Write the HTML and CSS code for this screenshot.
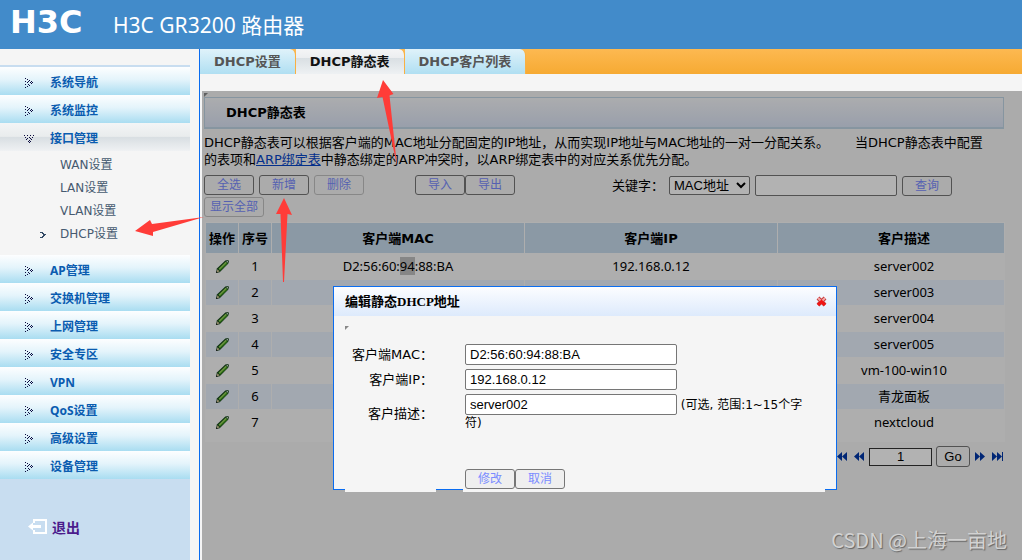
FILE: index.html
```html
<!DOCTYPE html>
<html lang="zh-CN">
<head>
<meta charset="utf-8">
<title>H3C GR3200 路由器</title>
<link rel="stylesheet" href="styles.css">
</head>
<body>
<svg class="defs" aria-hidden="true">
  <symbol id="dots" viewBox="0 0 10 10"><path fill="#0c0c40" shape-rendering="crispEdges" d="M1 0h1v1h-1zM3 1h1v1h-1zM1 3h1v1h-1zM5 2h1v1h-1zM4 3h1v1h-1zM7 3h1v1h-1zM3 4h1v1h-1zM6 4h1v1h-1zM8 4h1v1h-1zM1 6h1v1h-1zM4 6h1v1h-1zM7 5h1v1h-1zM5 7h1v1h-1zM3 8h1v1h-1zM1 9h1v1h-1z"/></symbol>
  <symbol id="pencil" viewBox="0 0 16 16"><path fill="#17461c" d="M1 15 2 10 11 1.5 14 1 15 2.5 14 5 5 14z"/><path fill="#3f9a1f" d="M3.5 10.5 11.5 3 13.5 5 5.5 12.5z"/><path fill="#9bd45c" d="M4 10.5 11.5 3 12.5 4 5 11.500z"/><path fill="#d8c99a" d="M1.800 14.200 2.600 11 5 13.400z"/><path fill="#d5e8d5" d="M12 2.300 13.400 1.800 14.200 2.800 13.700 4z"/><path fill="#222" d="M1 15 1.500 13 3 14.500z"/></symbol>
  <symbol id="prev" viewBox="0 0 10 9"><path fill="#0037a8" d="M5 0v9L0 4.500zM10 0v9L5 4.500z"/></symbol>
  <symbol id="next" viewBox="0 0 10 9"><path fill="#0037a8" d="M0 0v9L5 4.500zM5 0v9L10 4.500z"/></symbol>
</svg>

<header class="banner">
  <div class="logo">H3C</div>
  <h1 class="product">H3C GR3200 路由器</h1>
</header>

<div class="layout">
  <nav class="sidebar">
    <a class="item" href="#"><svg class="dots"><use href="#dots"/></svg>系统导航</a>
    <a class="item" href="#"><svg class="dots"><use href="#dots"/></svg>系统监控</a>
    <a class="item open" href="#"><svg class="dots"><use href="#dots"/></svg>接口管理</a>
    <div class="submenu">
      <a class="sub" href="#">WAN设置</a>
      <a class="sub" href="#">LAN设置</a>
      <a class="sub" href="#">VLAN设置</a>
      <a class="sub current" href="#"><svg class="mark" viewBox="0 0 6 6" shape-rendering="crispEdges"><path fill="#334a66" d="M0 0h3v1h-3zM2 1h2v1h-2zM3 2h3v1h-3zM2 4h2v1h-2zM0 5h3v1h-3zM3 3h2v1h-2z"/></svg>DHCP设置</a>
    </div>
    <a class="item" href="#"><svg class="dots"><use href="#dots"/></svg>AP管理</a>
    <a class="item" href="#"><svg class="dots"><use href="#dots"/></svg>交换机管理</a>
    <a class="item" href="#"><svg class="dots"><use href="#dots"/></svg>上网管理</a>
    <a class="item" href="#"><svg class="dots"><use href="#dots"/></svg>安全专区</a>
    <a class="item" href="#"><svg class="dots"><use href="#dots"/></svg>VPN</a>
    <a class="item" href="#"><svg class="dots"><use href="#dots"/></svg>QoS设置</a>
    <a class="item" href="#"><svg class="dots"><use href="#dots"/></svg>高级设置</a>
    <a class="item" href="#"><svg class="dots"><use href="#dots"/></svg>设备管理</a>
    <div class="logout">
      <a href="#"><svg class="exit" viewBox="0 0 19 16"><path fill="#fff" d="M5 0h14v15H5v-4h2v2h10V2H7v2H5zM0 7.500 5 3.500V6h8v3H5v2.500z"/></svg>退出</a>
    </div>
  </nav>

  <main class="main">
    <div class="tabs">
      <a class="tab" href="#">DHCP设置</a>
      <a class="tab active" href="#">DHCP静态表</a>
      <a class="tab" href="#">DHCP客户列表</a>
    </div>

    <div class="pane">
      <section class="content">
        <h2 class="title">DHCP静态表</h2>
        <p class="intro">DHCP静态表可以根据客户端的MAC地址分配固定的IP地址，从而实现IP地址与MAC地址的一对一分配关系。&emsp;&emsp;当DHCP静态表中配置的表项和<a href="#">ARP绑定表</a>中静态绑定的ARP冲突时，以ARP绑定表中的对应关系优先分配。</p>

        <div class="toolbar">
          <div class="group edit">
            <button class="btn">全选</button>
            <button class="btn">新增</button>
            <button class="btn" disabled>删除</button>
          </div>
          <div class="group transfer">
            <button class="btn">导入</button>
            <button class="btn">导出</button>
          </div>
          <div class="group search">
            <label for="field">关键字：</label>
            <select id="field"><option>MAC地址</option></select>
            <input class="keyword" type="text" aria-label="关键字">
            <button class="btn">查询</button>
          </div>
        </div>
        <button class="btn wide" disabled>显示全部</button>

        <div class="sheet">
          <table>
            <colgroup><col class="narrow"><col class="narrow"><col class="third"><col class="third"><col></colgroup>
            <thead><tr><th>操作</th><th>序号</th><th>客户端MAC</th><th>客户端IP</th><th>客户描述</th></tr></thead>
            <tbody>
              <tr><td><svg class="pencil"><use href="#pencil"/></svg></td><td>1</td><td>D2:56:60:<span class="picked">94</span>:88:BA</td><td>192.168.0.12</td><td>server002</td></tr>
              <tr><td><svg class="pencil"><use href="#pencil"/></svg></td><td>2</td><td></td><td></td><td>server003</td></tr>
              <tr><td><svg class="pencil"><use href="#pencil"/></svg></td><td>3</td><td></td><td></td><td>server004</td></tr>
              <tr><td><svg class="pencil"><use href="#pencil"/></svg></td><td>4</td><td></td><td></td><td>server005</td></tr>
              <tr><td><svg class="pencil"><use href="#pencil"/></svg></td><td>5</td><td></td><td></td><td>vm-100-win10</td></tr>
              <tr><td><svg class="pencil"><use href="#pencil"/></svg></td><td>6</td><td></td><td></td><td>青龙面板</td></tr>
              <tr><td><svg class="pencil"><use href="#pencil"/></svg></td><td>7</td><td></td><td></td><td>nextcloud</td></tr>
            </tbody>
          </table>
        </div>

        <div class="pager">
          <a class="first" href="#" aria-label="首页"><svg class="step"><use href="#prev"/></svg></a>
          <a href="#" aria-label="上一页"><svg class="step"><use href="#prev"/></svg></a>
          <span class="jump"><input type="text" value="1" aria-label="页码"><button class="go">Go</button></span>
          <a href="#" aria-label="下一页"><svg class="step"><use href="#next"/></svg></a>
          <a class="last" href="#" aria-label="末页"><svg class="step"><use href="#next"/></svg></a>
        </div>
      </section>

      <div class="dialog" role="dialog" aria-labelledby="dialog-title">
        <div class="dialog-head">
          <h3 id="dialog-title">编辑静态DHCP地址</h3>
          <button class="close" aria-label="关闭"><svg viewBox="0 0 11 11"><path d="M2 2 9 9M9 2 2 9" stroke="#c63a3a" stroke-width="4"/><path d="M2 2 5 5M9 2 6 5" stroke="#f4a5a5" stroke-width="2"/><path d="M2 9 5.500 5.500 9 9" stroke="#f01414" stroke-width="3" fill="none"/></svg></button>
        </div>
        <form class="form">
          <label for="mac">客户端MAC：</label>
          <div class="value"><input id="mac" type="text" value="D2:56:60:94:88:BA"></div>
          <label for="ip">客户端IP：</label>
          <div class="value"><input id="ip" type="text" value="192.168.0.12"></div>
          <label for="desc">客户描述：</label>
          <div class="value"><input id="desc" type="text" value="server002"> (可选, 范围:1~15个字符)</div>
          <div class="actions"><button class="btn" type="button">修改</button><button class="btn" type="button">取消</button></div>
        </form>
      </div>
    </div>
  </main>
</div>

<svg class="arrows" viewBox="0 0 1022 560" aria-hidden="true">
  <path d="M383 80 393.500 94 389.500 95.500 397 166 382.500 97 377 98z"/>
  <path d="M284 198 292 215 287.500 214 284 282 283 282 280.500 214 276 214z"/>
  <path d="M135 231 150 220 152 224 204 217 153 232 153 236z"/>
</svg>
<div class="credit">CSDN @上海一亩地</div>
</body>
</html>
```
FILE: styles.css
```css
* { box-sizing: border-box; }

body {
  margin: 0;
  min-height: 100vh;
  display: flex;
  flex-direction: column;
  position: relative;
  background: #f5f5f5;
  color: #000;
  font: 13px/17px "DejaVu Sans", "Noto Sans CJK SC", sans-serif;
}

h1, h2, h3, p { margin: 0; }
button, input, select { margin: 0; font-family: inherit; }
.defs { position: absolute; width: 0; height: 0; }

.banner {
  display: flex;
  align-items: center;
  height: 49px;
  padding-left: 10px;
  background: #428bca;
  color: #fff;
}
.logo { width: 103px; font: bold 32px/36px "DejaVu Sans", sans-serif; padding-bottom: 6px; }
.product { font: 21px/28px "Noto Sans", "Noto Sans CJK SC", sans-serif; }

.layout { flex: 1; display: flex; }

.sidebar {
  flex: none;
  display: flex;
  flex-direction: column;
  width: 190px;
  margin-right: 9px;
  padding-top: 16px;
}
.sidebar a { text-decoration: none; }
.item {
  display: flex;
  align-items: center;
  gap: 16px;
  height: 28px;
  padding: 4px 0 0 24px;
  background: linear-gradient(#fdfeff, #e4f4fb 45%, #a9ddf1);
  color: #0a5cb0;
  font: bold 12px/20px "Noto Sans", "Noto Sans CJK SC", sans-serif;
}
.item:first-child { border-top: 2px solid #c8ddf0; height: 30px; }
.dots { width: 10px; height: 10px; }
.open { background: linear-gradient(#f3f5f6, #e9eced 48%, #d8dee2 50%, #eff1f3); }
.open .dots { transform: rotate(90deg); }
.submenu { padding: 3px 0 9px; }
.sub {
  display: flex;
  align-items: center;
  height: 23px;
  padding-left: 60px;
  color: #465a70;
  font-size: 12px;
}
.sub.current { padding-left: 40px; gap: 14px; }
.mark { width: 6px; height: 6px; }
.logout { flex: 1; padding: 38px 0 0 28px; background: #c8ddf0; }
.logout a {
  display: inline-flex;
  align-items: center;
  gap: 5px;
  color: #4b1b8c;
  font: bold 14px/20px "Noto Sans CJK SC", sans-serif;
}
.exit { width: 19px; height: 16px; }

.main {
  flex: 1;
  min-width: 0;
  display: flex;
  flex-direction: column;
  border-left: 1px solid #0a6cf0;
}
.tabs { display: flex; height: 25px; margin-bottom: 17px; background: linear-gradient(#fdb951, #f6aa33); }
.tab {
  padding: 0 14px;
  border-right: 1px solid #f9b043;
  border-radius: 0 6px 0 0;
  background: linear-gradient(#dff2fa, #b0dff2);
  color: #555;
  font: bold 13px/25px "DejaVu Sans", "Noto Sans CJK SC", sans-serif;
  text-decoration: none;
}
.tab.active {
  background: linear-gradient(#f4f5f6, #eceef0 35%, #d9dfe3 36%, #eef1f3);
  color: #111;
}

.pane { flex: 1; position: relative; margin-left: 2px; }
.pane::after {
  content: "";
  position: absolute;
  inset: 0;
  background: rgba(0, 0, 0, .3);
}
.content { padding: 6px 18px 20px 2px; background: #f5f5f5; }
.title {
  padding: 0 0 0 21px;
  border: 1px solid #c0d6e6;
  border-bottom-width: 2px;
  background: linear-gradient(#f6f7fa, #dbe4f5);
  font: bold 13px/29px "DejaVu Sans", "Noto Sans CJK SC", sans-serif;
}
.content::before, .form::before {
  content: "";
  position: absolute;
  top: 2px;
  left: 2px;
  border: 2px solid #888;
  border-right-color: transparent;
  border-bottom-color: transparent;
}
.intro { padding: 5px 14px 7px 0; }
.intro a { color: #0645c8; }

.btn {
  width: 50px;
  height: 20px;
  padding: 0;
  border: 1px solid #767676;
  border-radius: 3px;
  background: #efefef;
  color: #7a8cff;
  font-size: 12px;
  line-height: 16px;
}
.content .btn { background: #f5f5f5; }
.btn:disabled { border-color: #c2c2c2; }
.content .wide { width: 60px; display: block; }

.toolbar { display: flex; align-items: flex-start; height: 22px; }
.group { display: flex; align-items: center; }
.edit { gap: 5px; margin-right: 51px; }
.search { gap: 5px; margin-left: 97px; }
.search label { width: 52px; white-space: nowrap; }
select {
  width: 81px;
  height: 19px;
  padding: 0;
  border: 1px solid #767676;
  border-radius: 2px;
  background: #fff;
  color: #000;
  font: 13px "Liberation Sans", "Noto Sans CJK SC", sans-serif;
}
input {
  height: 21px;
  padding: 0 4px;
  border: 1px solid #767676;
  border-radius: 2px;
  background: #fff;
  color: #000;
  font: 13px "Liberation Sans", "Noto Sans CJK SC", sans-serif;
}
.keyword { width: 142px; }

.sheet { margin: 5px -1px 0 1px; padding-bottom: 6px; background: #fafafa; }
table { width: 100%; table-layout: fixed; border-spacing: 1px; }
.narrow { width: 32px; }
.third { width: 252px; }
th { height: 30px; padding: 0; background: #c7dcec; font: bold 13px/17px "DejaVu Sans", "Noto Sans CJK SC", sans-serif; }
td { height: 25px; padding: 0; text-align: center; font: 13px/17px "Noto Sans", "Noto Sans CJK SC", sans-serif; }
th:last-child, td:last-child { padding-left: 26px; }
tbody tr:nth-child(even) td { background: #e9f1fc; }
.pencil { display: block; width: 15px; height: 15px; margin: 0 auto; }
.picked { background: #c0c0c0; }

.pager { display: flex; justify-content: flex-end; align-items: center; gap: 3px; padding-top: 4px; }
.pager a { display: flex; padding: 0 2px; }
.step { width: 10px; height: 9px; }
.first, .last { color: #0037a8; }
.first .step { box-sizing: content-box; border-left: 1px solid; }
.last { margin-right: -1px; }
.last .step { box-sizing: content-box; border-right: 1px solid; }
.jump { display: flex; align-items: center; gap: 4px; }
.jump input { width: 63px; height: 18px; border: 1px solid #333; border-radius: 0; text-align: center; }
.go {
  width: 34px;
  height: 21px;
  padding: 0;
  border: 1px solid #767676;
  border-radius: 3px;
  background: #f5f5f5;
  color: #000;
  font: 13px "Liberation Sans", sans-serif;
}

.dialog {
  position: absolute;
  z-index: 2;
  top: 195px;
  left: 131px;
  width: 504px;
  border: 1px solid #0a6cf0;
  background: #f5f5f5;
}
.dialog::before, .dialog::after {
  content: "";
  position: absolute;
  bottom: -3px;
  height: 4px;
  background: #f5f5f5;
}
.dialog::before { left: 11px; width: 91px; }
.dialog::after { left: 129px; right: 11px; }
.dialog-head {
  display: flex;
  align-items: center;
  justify-content: space-between;
  height: 29px;
  padding: 0 9px 0 11px;
  background: linear-gradient(#fcfdff, #ddeafc);
}
.dialog-head h3 { font: bold 13px/20px "Liberation Serif", "Noto Sans CJK SC", serif; }
.close { display: flex; padding: 0; border: 0; background: none; }
.close svg { width: 11px; height: 11px; }
.form {
  position: relative;
  display: grid;
  grid-template-columns: 88px 1fr;
  column-gap: 32px;
  row-gap: 4px;
  margin: 0 11px;
  padding-top: 28px;
}
.form::before { top: 10px; left: 0; }
.form label { align-self: center; text-align: right; white-space: nowrap; }
.value { min-width: 0; padding-right: 12px; font: 12px/17px "DejaVu Sans", "Noto Sans CJK SC", sans-serif; }
.value input { width: 212px; }
.actions { display: flex; grid-column: 2; padding-top: 33px; position: relative; z-index: 3; }

.arrows { position: absolute; z-index: 4; top: 0; left: 0; width: 1022px; height: 560px; fill: #ff3c38; pointer-events: none; }
.credit {
  position: absolute;
  z-index: 5;
  right: 15px;
  bottom: 6px;
  color: #d2d2d2;
  font: 20px/28px "Noto Sans CJK SC", sans-serif;
  text-shadow: 1px 1px 1px #666;
}
```
